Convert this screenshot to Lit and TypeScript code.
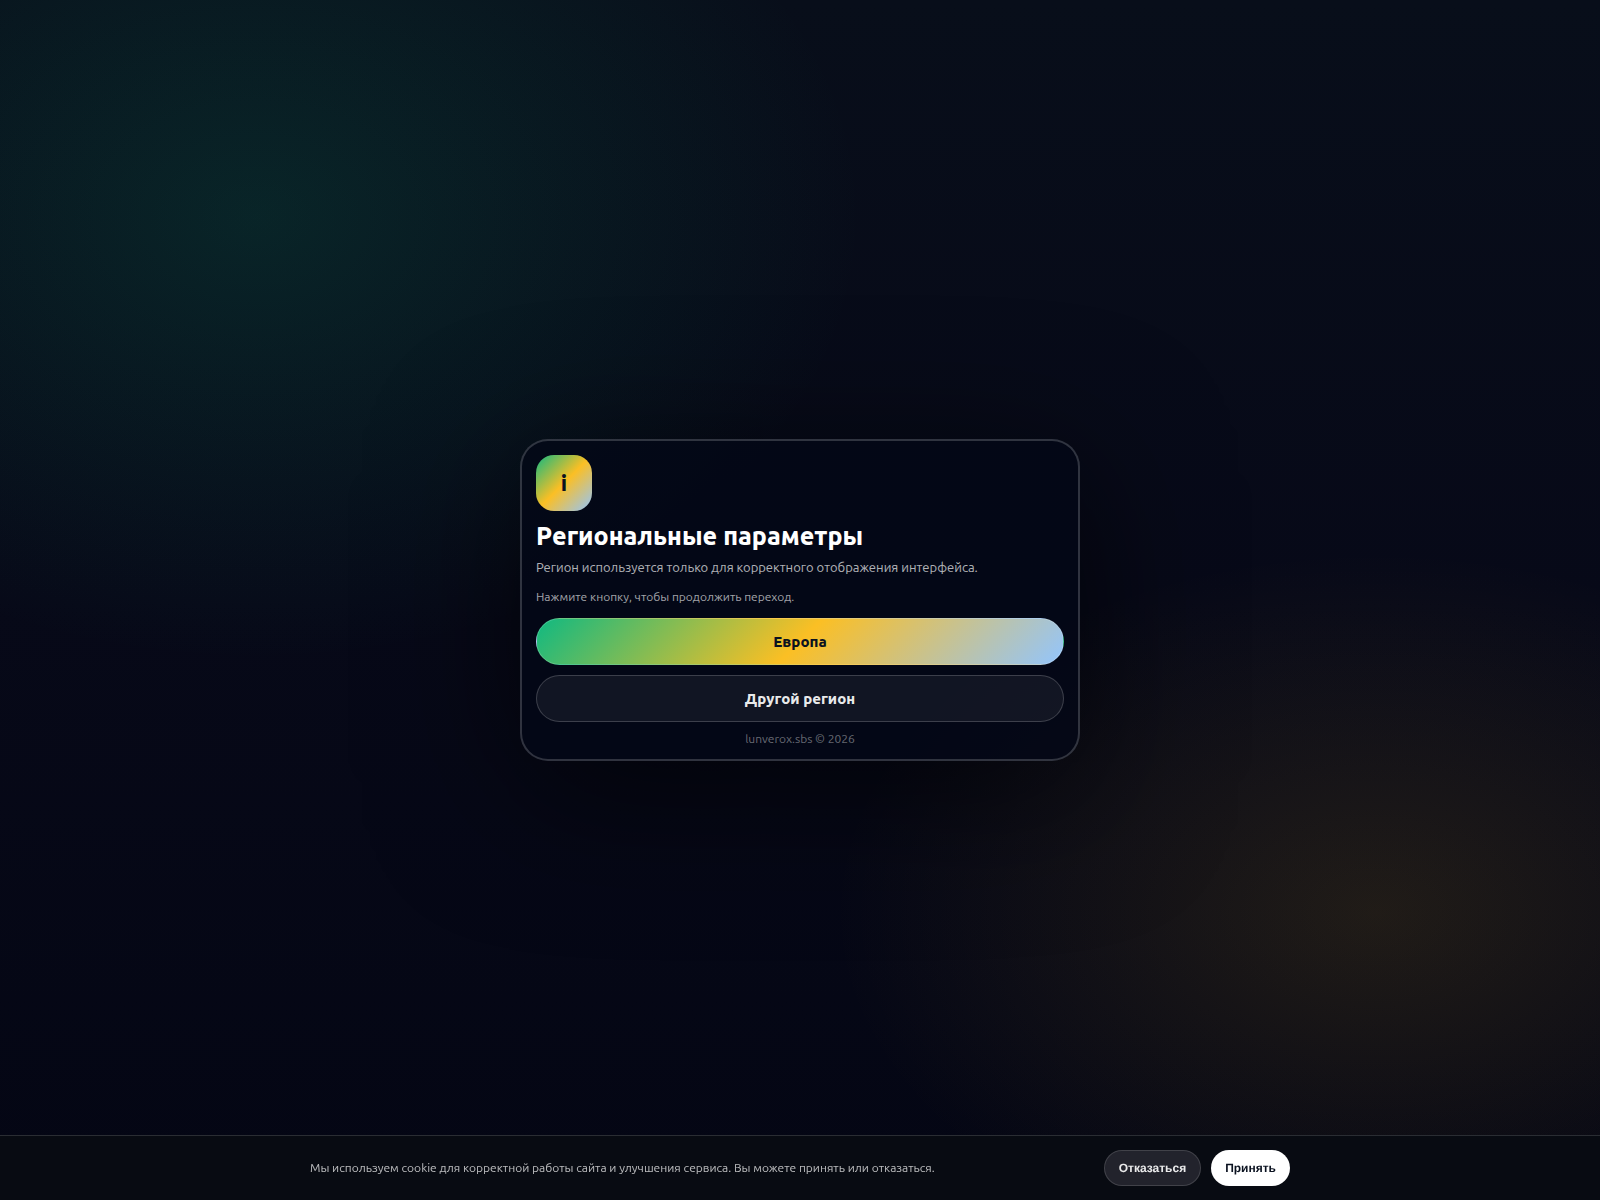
import { LitElement, html, css } from "lit";
import { customElement, state } from "lit/decorators.js";

@customElement("app-root")
export class AppRoot extends LitElement {
  static styles = css`
    :host {
      display: block;
      color: #fff;
      font-family: Ubuntu, "Noto Sans", "Open Sans", sans-serif;
    }
    * {
      box-sizing: border-box;
    }
    .page {
      min-height: 100vh;
      display: grid;
      place-items: center;
      padding: 16px;
      background:
        radial-gradient(ellipse at 16% 18%, rgba(16, 185, 129, 0.14), transparent 32%) no-repeat,
        radial-gradient(ellipse at 86% 76%, rgba(251, 191, 36, 0.11), transparent 28%) no-repeat,
        linear-gradient(180deg, #080e1a, #070918 50%, #040614);
      overflow: hidden;
    }
    .card {
      width: 100%;
      max-width: 560px;
      padding: 14px;
      border: 2px solid rgba(255, 255, 255, 0.18);
      border-radius: 28px;
      background: rgba(3, 7, 22, 0.74);
      box-shadow: 0 28px 144px rgba(0, 0, 0, 0.65);
    }
    .mark {
      display: grid;
      place-items: center;
      width: 56px;
      height: 56px;
      padding-bottom: 2px;
      border-radius: 18px;
      background: linear-gradient(135deg, #10b981, #fbbf24 50%, #93c5fd);
      color: #0b1220;
      font-size: 22px;
      font-weight: 900;
    }
    h1 {
      margin: 10px 0 6px;
      font-size: 25px;
      line-height: 30px;
      font-weight: 900;
    }
    p {
      margin: 0;
    }
    .lead {
      font-size: 13px;
      line-height: 20px;
      color: rgba(255, 255, 255, 0.7);
    }
    .hint {
      margin: 10px 0 12px;
      font-size: 12px;
      line-height: 19px;
      color: rgba(255, 255, 255, 0.64);
    }
    .choices {
      display: grid;
      gap: 10px;
    }
    .choice {
      height: 47px;
      border: 1px solid rgba(255, 255, 255, 0.18);
      border-radius: 999px;
      background: rgba(255, 255, 255, 0.06);
      color: rgba(255, 255, 255, 0.92);
      font: inherit;
      font-size: 15px;
      font-weight: 900;
      cursor: pointer;
    }
    .choice.main {
      background: linear-gradient(135deg, #10b981, #fbbf24 50%, #93c5fd);
      color: #0b1220;
    }
    .foot {
      margin-top: 10px;
      text-align: center;
      font-size: 12px;
      line-height: 13px;
      color: rgba(255, 255, 255, 0.4);
    }
    .cookie {
      position: fixed;
      inset: auto 0 0;
      padding: 14px;
      border-top: 1px solid rgba(255, 255, 255, 0.14);
      background: rgba(8, 11, 19, 0.96);
    }
    .inner {
      display: flex;
      align-items: center;
      justify-content: space-between;
      flex-wrap: wrap;
      gap: 10px;
      max-width: 980px;
      margin: 0 auto;
    }
    .note {
      font-size: 12px;
      line-height: 18px;
      color: rgba(255, 255, 255, 0.72);
    }
    .actions {
      display: flex;
      gap: 10px;
    }
    .pill {
      height: 36px;
      padding: 0 14px;
      border: 1px solid rgba(255, 255, 255, 0.14);
      border-radius: 999px;
      background: #22232c;
      color: rgba(255, 255, 255, 0.9);
      font-family: "Liberation Sans", Arial, sans-serif;
      font-size: 12px;
      font-weight: 900;
      text-rendering: geometricPrecision;
      cursor: pointer;
    }
    .pill.accept {
      border: 0;
      background: #fff;
      color: #0b1220;
    }
  `;

  @state() private cookieOpen = true;

  private closeCookie() {
    this.cookieOpen = false;
  }

  render() {
    return html`
      <main class="page">
        <section class="card" aria-labelledby="title">
          <div class="mark" aria-hidden="true">i</div>
          <h1 id="title">Региональные параметры</h1>
          <p class="lead">Регион используется только для корректного отображения интерфейса.</p>
          <p class="hint">Нажмите кнопку, чтобы продолжить переход.</p>
          <div class="choices">
            <button class="choice main" type="button">Европа</button>
            <button class="choice" type="button">Другой регион</button>
          </div>
          <p class="foot">lunverox.sbs © 2026</p>
        </section>
      </main>
      ${this.cookieOpen
        ? html`<aside class="cookie">
            <div class="inner">
              <p class="note">Мы используем cookie для корректной работы сайта и улучшения сервиса. Вы можете принять или отказаться.</p>
              <div class="actions">
                <button class="pill" type="button" @click=${this.closeCookie}>Отказаться</button>
                <button class="pill accept" type="button" @click=${this.closeCookie}>Принять</button>
              </div>
            </div>
          </aside>`
        : null}
    `;
  }
}
